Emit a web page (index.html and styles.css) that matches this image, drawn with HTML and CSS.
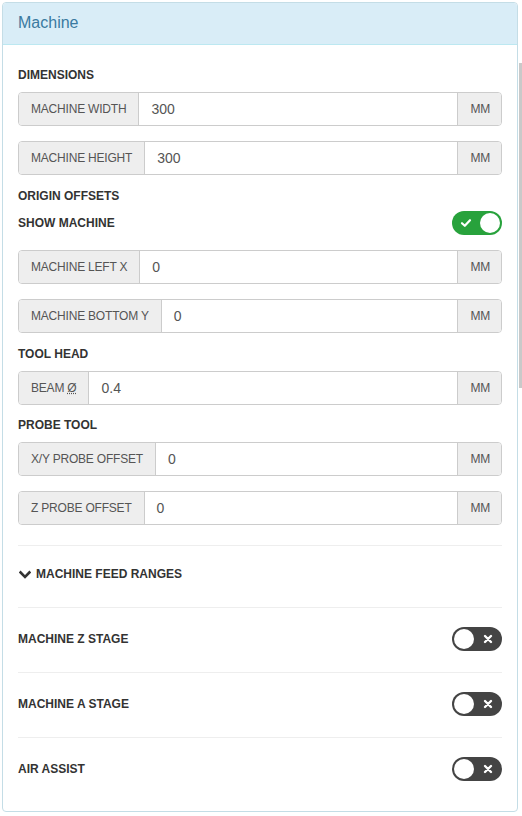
FILE: index.html
```html
<!DOCTYPE html>
<html>
<head>
<meta charset="utf-8">
<link rel="stylesheet" href="styles.css">
</head>
<body>
<div class="panel">
  <div class="panel-heading"><h3 class="panel-title">Machine</h3></div>
  <div class="panel-body">
    <div class="section-label first">DIMENSIONS</div>
    <div class="input-group"><span class="addon">MACHINE WIDTH</span><span class="control">300</span><span class="addon unit">MM</span></div>
    <div class="input-group"><span class="addon">MACHINE HEIGHT</span><span class="control">300</span><span class="addon unit">MM</span></div>
    <div class="section-label">ORIGIN OFFSETS</div>
    <div class="toggle-line">
      <span class="section-label inline">SHOW MACHINE</span>
      <span class="toggle on">
        <svg class="tick" width="12" height="10" viewBox="0 0 12 10"><path d="M2 5.2 L4.8 7.8 L10 2.2" fill="none" stroke="#fff" stroke-width="2.2" stroke-linecap="round" stroke-linejoin="round"/></svg>
        <span class="knob"></span>
      </span>
    </div>
    <div class="input-group"><span class="addon">MACHINE LEFT X</span><span class="control">0</span><span class="addon unit">MM</span></div>
    <div class="input-group"><span class="addon">MACHINE BOTTOM Y</span><span class="control">0</span><span class="addon unit">MM</span></div>
    <div class="section-label">TOOL HEAD</div>
    <div class="input-group"><span class="addon"><span>BEAM&nbsp;<abbr class="dia">Ø</abbr></span></span><span class="control">0.4</span><span class="addon unit">MM</span></div>
    <div class="section-label tight">PROBE TOOL</div>
    <div class="input-group"><span class="addon">X/Y PROBE OFFSET</span><span class="control">0</span><span class="addon unit">MM</span></div>
    <div class="input-group last"><span class="addon">Z PROBE OFFSET</span><span class="control">0</span><span class="addon unit">MM</span></div>

    <div class="feed-row">
      <svg class="chev" width="12" height="10" viewBox="0 0 12 10"><path d="M1.6 2.4 L6 6.8 L10.4 2.4" fill="none" stroke="#333" stroke-width="2.6" stroke-linecap="square"/></svg>
      <span class="section-label inline">MACHINE FEED RANGES</span>
    </div>
    <div class="switch-row">
      <span class="section-label inline">MACHINE Z STAGE</span>
      <span class="toggle off"><span class="knob"></span><svg class="cross" width="10" height="10" viewBox="0 0 10 10"><path d="M2 2 L8 8 M8 2 L2 8" stroke="#fff" stroke-width="2.4" stroke-linecap="round"/></svg></span>
    </div>
    <div class="switch-row">
      <span class="section-label inline">MACHINE A STAGE</span>
      <span class="toggle off"><span class="knob"></span><svg class="cross" width="10" height="10" viewBox="0 0 10 10"><path d="M2 2 L8 8 M8 2 L2 8" stroke="#fff" stroke-width="2.4" stroke-linecap="round"/></svg></span>
    </div>
    <div class="switch-row">
      <span class="section-label inline">AIR ASSIST</span>
      <span class="toggle off"><span class="knob"></span><svg class="cross" width="10" height="10" viewBox="0 0 10 10"><path d="M2 2 L8 8 M8 2 L2 8" stroke="#fff" stroke-width="2.4" stroke-linecap="round"/></svg></span>
    </div>
  </div>
</div>
<div class="scroll-thumb"></div>
</body>
</html>
```
FILE: styles.css
```css
html, body {
  margin: 0;
  padding: 0;
  background: #fff;
}
body {
  font-family: "Liberation Sans", Arial, sans-serif;
  font-size: 14px;
  color: #333;
  position: relative;
  width: 522px;
  height: 816px;
  overflow: hidden;
}
.panel {
  margin: 2px 4px 0 2px;
  border: 1px solid #c4dde6;
  border-radius: 4px;
  background: #fff;
  height: 810px;
  box-sizing: border-box;
  overflow: hidden;
}
.panel-heading {
  background: #d9edf7;
  border-bottom: 1px solid #bce8f1;
  padding: 11px 15px 12px;
  border-radius: 3px 3px 0 0;
}
.panel-title {
  margin: 0;
  font-size: 16px;
  font-weight: normal;
  line-height: 18px;
  color: #3a7aa0;
}
.panel-body {
  padding: 22px 15px 0;
}
.section-label {
  font-size: 12px;
  font-weight: bold;
  line-height: 17px;
  color: #333;
  margin-top: -2px;
  margin-bottom: 8px;
}
.section-label.first {
  margin-top: 0;
}
.section-label.tight {
  margin-top: -3px;
}
.section-label.inline {
  margin: 0;
}
.input-group {
  display: flex;
  height: 34px;
  box-sizing: border-box;
  border: 1px solid #ccc;
  border-radius: 4px;
  margin-bottom: 15px;
  overflow: hidden;
}
.input-group.last {
  margin-bottom: 20px;
}
.addon {
  display: flex;
  align-items: center;
  padding: 0 12px;
  background: #eee;
  color: #555;
  font-size: 12px;
  letter-spacing: -0.2px;
  white-space: nowrap;
  border-right: 1px solid #ccc;
}
.addon.unit {
  border-right: none;
  border-left: 1px solid #ccc;
  padding: 0 11px 0 12px;
}
.dia {
  text-decoration: underline dotted;
}
.control {
  flex: 1;
  display: flex;
  align-items: center;
  padding: 0 12px;
  font-size: 14px;
  color: #555;
  background: #fff;
}
.toggle-line {
  display: flex;
  align-items: center;
  justify-content: space-between;
  margin-top: -2px;
  margin-bottom: 15px;
}
.toggle {
  width: 50px;
  height: 24px;
  border-radius: 12px;
  box-sizing: border-box;
  display: flex;
  align-items: center;
  padding: 2px;
}
.toggle.on {
  background: #28a23c;
  justify-content: space-between;
  padding-left: 8px;
}
.toggle.off {
  background: #444;
  justify-content: space-between;
  padding-right: 9px;
}
.knob {
  width: 20px;
  height: 20px;
  border-radius: 50%;
  background: #fff;
}
.feed-row {
  border-top: 1px solid #eee;
  display: flex;
  align-items: center;
  gap: 5px;
  padding: 20px 0 24px 1px;
}
.switch-row {
  border-top: 1px solid #eee;
  display: flex;
  align-items: center;
  justify-content: space-between;
  padding: 19px 0 21px;
}
.scroll-thumb {
  position: absolute;
  left: 519px;
  top: 63px;
  width: 3px;
  height: 325px;
  background: #c9c9c9;
}
```
